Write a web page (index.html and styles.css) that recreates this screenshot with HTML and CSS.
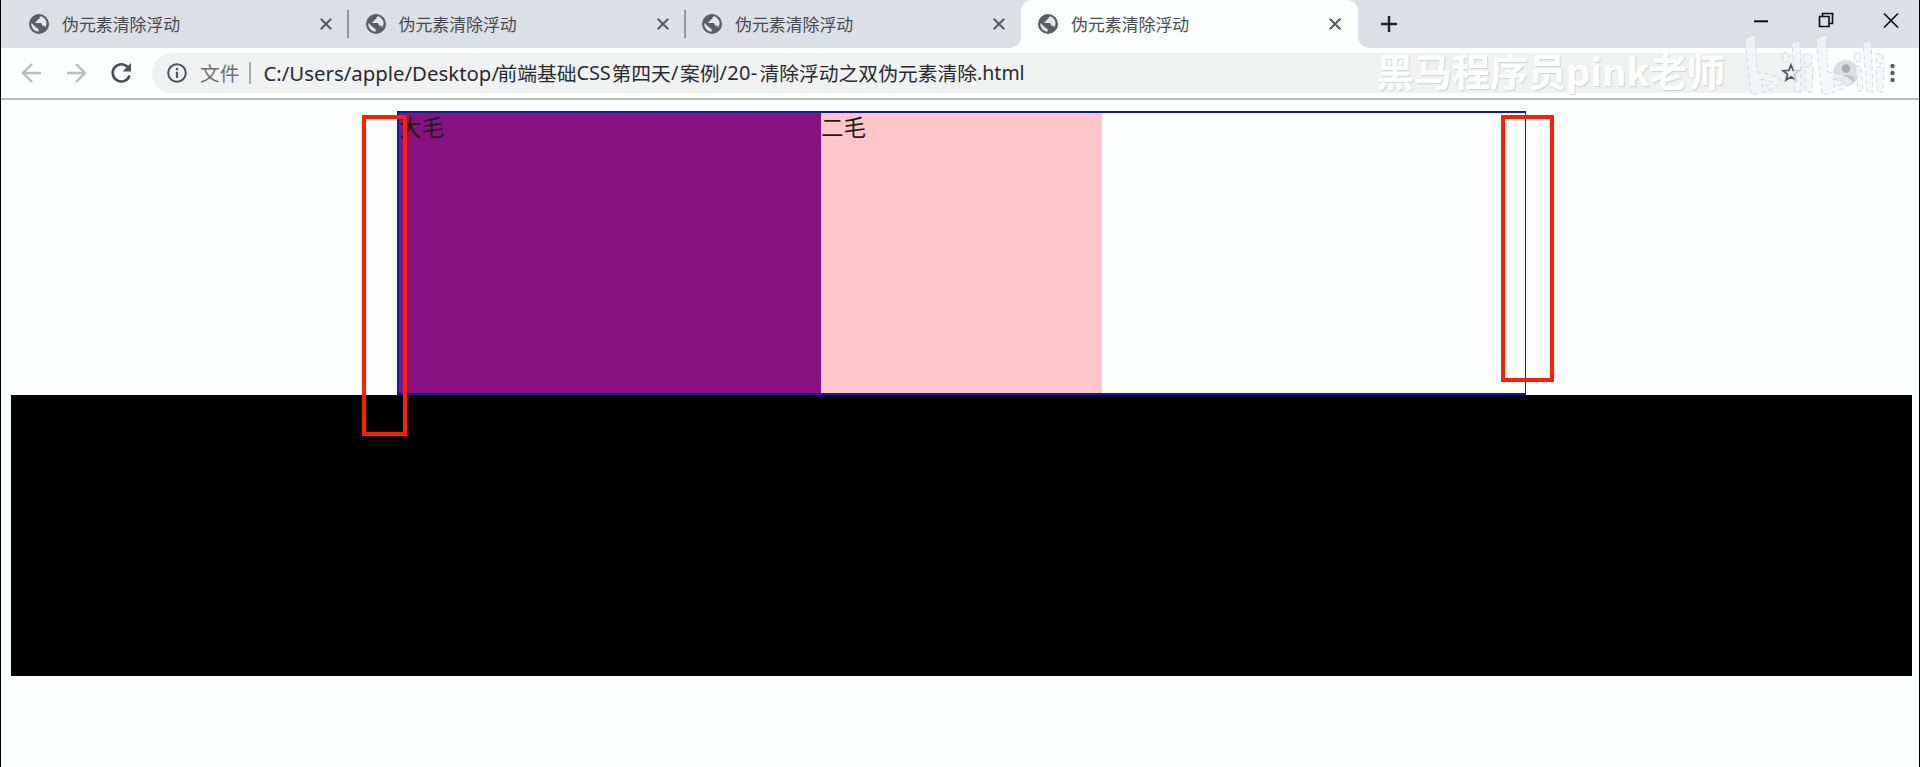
FILE: index.html
```html
<!DOCTYPE html>
<html lang="zh-CN">
<head>
<meta charset="utf-8">
<title>伪元素清除浮动</title>
<link rel="stylesheet" href="styles.css">
</head>
<body>
<svg width="0" height="0" class="defs">
  <symbol id="globe" viewBox="0 0 20 20">
    <circle cx="10" cy="10" r="10" fill="#5b5f63"/>
    <path d="M12.2 2.2 Q10.5 2.6 10.4 4.2 Q10.6 5.2 9.2 5.5 Q8 5.8 8 7 Q7.8 7.8 6.4 7.8 Q6 8.8 7 9 H11.5 Q13 9.2 13 11 Q13.4 11.8 14.6 11.6 Q16 12 16 13.8 A7.8 7.8 0 0 0 15.3 4.2 Q14 2.8 12.2 2.2Z M2.3 9 L6.4 12.8 Q7 14 8.6 14.2 Q9.6 14.6 9.6 15.6 V17.7 A7.8 7.8 0 0 1 2.3 9Z" fill="#e4e7ea"/>
  </symbol>
  <symbol id="close" viewBox="0 0 12 12"><path d="M.7.7 11.3 11.3M11.3.7.7 11.3" stroke="#55595d" stroke-width="2"/></symbol>
</svg>
<div class="window">
  <header class="tabs">
    <div class="tab"><svg class="favicon"><use href="#globe"/></svg><span class="title">伪元素清除浮动</span><svg class="close"><use href="#close"/></svg></div>
    <div class="tab"><svg class="favicon"><use href="#globe"/></svg><span class="title">伪元素清除浮动</span><svg class="close"><use href="#close"/></svg></div>
    <div class="tab last"><svg class="favicon"><use href="#globe"/></svg><span class="title">伪元素清除浮动</span><svg class="close"><use href="#close"/></svg></div>
    <div class="tab active"><svg class="favicon"><use href="#globe"/></svg><span class="title">伪元素清除浮动</span><svg class="close"><use href="#close"/></svg></div>
    <svg class="plus" viewBox="0 0 16 16"><path d="M8 0V16M0 8H16" stroke="#222529" stroke-width="2.4"/></svg>
    <svg class="controls" viewBox="0 0 146 18" fill="none" stroke="#111">
      <path d="M0 11.3H14" stroke-width="2"/>
      <path d="M65.5 6.5H75V16.5H65.5ZM68.5 6V3.5H78.5V13.5H75.5" stroke-width="1.7"/>
      <path d="M130 3.5 144 17.5M144 3.5 130 17.5" stroke-width="1.7"/>
    </svg>
  </header>
  <nav class="toolbar">
    <svg class="nav" viewBox="0 0 112 22" fill="none" stroke-width="2.4">
      <path d="M21 11H3M12 2 3 11 12 20" stroke="#b9bbbd"/>
      <path d="M47 11H65M56 2 65 11 56 20" stroke="#b9bbbd"/>
      <path d="M108 5.5A8.6 8.6 0 1 0 109.5 13.5" stroke="#4c5054" stroke-width="2.6"/>
      <path d="M111 1V9.5H102.5Z" fill="#4c5054"/>
    </svg>
    <div class="omnibox">
      <svg class="info" viewBox="0 0 20 20"><circle cx="10" cy="10" r="8.8" fill="none" stroke="#4f5357" stroke-width="2"/><path d="M10 8.7V15M10 5V7.2" stroke="#4f5357" stroke-width="2.2"/></svg>
      <span class="scheme">文件</span>
      <span class="url"><span class="lat a">C:/Users/apple/Desktop/</span><span>前端基础</span><span class="lat b">CSS</span><span>第四天</span><span class="lat c">/</span><span>案例</span><span class="lat d">/20-</span><span>清除浮动之双伪元素清除</span><span class="lat e">.html</span></span>
      <svg class="star" viewBox="0 0 20 20"><path d="M10 2 12.2 7.4 18 7.8 13.5 11.4 15 17 10 13.9 5 17 6.5 11.4 2 7.8 7.8 7.4Z" fill="none" stroke="#55585b" stroke-width="1.8"/></svg>
    </div>
    <svg class="avatar" viewBox="0 0 26 26"><circle cx="13" cy="13" r="13" fill="#dcdedf"/><circle cx="13" cy="8.5" r="4.2" fill="#a9acae"/><path d="M4 20Q6 15 13 15T22 20Q18 25 13 25T4 20Z" fill="#bfc1c3"/></svg>
    <svg class="menu" viewBox="0 0 5 20" fill="#5a5d60"><circle cx="2.5" cy="3" r="2.2"/><circle cx="2.5" cy="10" r="2.2"/><circle cx="2.5" cy="17" r="2.2"/></svg>
  </nav>
  <main class="page">
    <section class="box"><div class="big">大毛</div><div class="small">二毛</div></section>
    <div class="footer"></div>
  </main>
  <div class="mark mark-left"></div>
  <div class="mark mark-right"></div>
  <div class="watermark">黑马程序员pink老师</div>
  <svg class="logo" viewBox="0 0 145 64" fill="#f3f4f5" fill-opacity=".75" stroke="#cfd2d5" stroke-width=".8" stroke-dasharray="5 3">
    <path d="M1 5 11 0 13 38Q32 40 38 48 26 58 7 61ZM72 5 82 0 84 38Q103 40 109 48 97 58 78 61Z"/>
    <path d="M48 8H56L57 58H51ZM119 8H127L129 58H123ZM38 20 44 18 46 27 40 28ZM60 20H68V30H61ZM61 33H69L68 58H62ZM110 20 116 18 117 27 111 28ZM132 20H139V30H133ZM132 33H140L139 58H133ZM111 32H117L119 57H114Z"/>
    <path d="M17 45 29 48 19 54ZM89 45 101 48 91 54Z"/>
  </svg>
</div>
</body>
</html>
```
FILE: styles.css
```css
* { box-sizing: border-box; }
body { margin: 0; background: #fdfffe; font-family: "Noto Sans", "Noto Sans CJK SC", sans-serif; }
svg { display: block; flex: none; }
.defs { position: absolute; }
.window { position: relative; height: 767px; overflow: hidden; border-left: 1px solid #000; border-right: 1px solid #000; background: #fdfffe; }

.tabs { display: flex; align-items: center; height: 48px; background: #dcdfe4; }
.tab { position: relative; display: flex; align-items: center; width: 336.5px; height: 48px; padding: 0 16px 0 17.5px; }
.tab:first-child { width: 347px; padding-left: 28px; }
.tab.last { width: 336px; }
.tab:not(.last):not(.active)::after { content: ""; position: absolute; right: -1px; top: 10px; width: 2px; height: 28px; background: #93969b; }
.tab.active { background: #fdfffe; border-radius: 11px 11px 0 0; width: 337.5px; padding-right: 17px; }
.tab.active::before, .tab.active::after { content: ""; position: absolute; bottom: 0; width: 11px; height: 11px; }
.tab.active::before { left: -11px; background: radial-gradient(circle at 0 0, #dcdfe4 10.5px, #fdfffe 11px); }
.tab.active::after { right: -11px; background: radial-gradient(circle at 100% 0, #dcdfe4 10.5px, #fdfffe 11px); }
.favicon { width: 20px; height: 20px; }
.title { margin-left: 13px; font: 400 16.9px/24px "Noto Sans CJK SC", sans-serif; color: #484c52; white-space: nowrap; }
.close { width: 12px; height: 12px; margin-left: auto; }
.plus { width: 16px; height: 16px; margin-left: 23px; }
.controls { width: 146px; height: 18px; margin: -10px 19px 0 auto; }

.toolbar { display: flex; align-items: center; height: 52px; padding-left: 19px; border-bottom: 2px solid #b9bbbd; }
.nav { width: 112px; height: 22px; }
.omnibox { display: flex; align-items: center; width: 1662px; height: 40px; margin-left: 20px; padding-left: 15px; border-radius: 20px; background: #f0f2f2; }
.info { width: 20px; height: 20px; }
.scheme { margin-left: 13px; padding-right: 10px; border-right: 2px solid #a9acaf; font: 400 19.7px/22px "Noto Sans CJK SC", sans-serif; color: #6b6f74; }
.url { display: flex; margin-left: 12px; font: 400 19.8px/28px "Noto Sans CJK SC", sans-serif; color: #282b30; white-space: nowrap; }
.lat { flex: none; font-family: "Noto Sans", sans-serif; font-size: 20px; }
.a { width: 234px; font-size: 20.4px; }
.b { width: 35px; letter-spacing: -.2px; }
.c { width: 9px; }
.d { width: 40px; letter-spacing: .3px; }
.e { font-size: 19.5px; }
.star { width: 20px; height: 20px; margin: 0 13px 0 auto; }
.avatar { width: 26px; height: 26px; margin-left: 19px; }
.menu { width: 5px; height: 20px; margin-left: 31px; }

.page { padding: 11px 7px 0 10px; }
.box { display: flex; width: 1129px; height: 284px; margin-left: 386px; border: 2px solid #1717a8; border-right-width: 1px; font: 400 22.5px/27px "Noto Sans CJK SC", sans-serif; color: #1c1c1c; }
.big { width: 422px; background: #881280; }
.small { width: 281px; background: #ffc6ca; }
.footer { height: 281px; background: #000; }

.mark { position: absolute; border: 4px solid #ff1e00; }
.mark-left { left: 361px; top: 115px; width: 45px; height: 321px; }
.mark-right { left: 1500px; top: 115px; width: 53px; height: 267px; }
.watermark { position: absolute; left: 1375px; top: 48px; font: 700 38px/44px "Noto Sans CJK SC", sans-serif; color: #fdfffe; text-shadow: 1px 1px 1px #cfd1d3; white-space: nowrap; }
.logo { position: absolute; left: 1743px; top: 34px; width: 145px; height: 64px; }
```
